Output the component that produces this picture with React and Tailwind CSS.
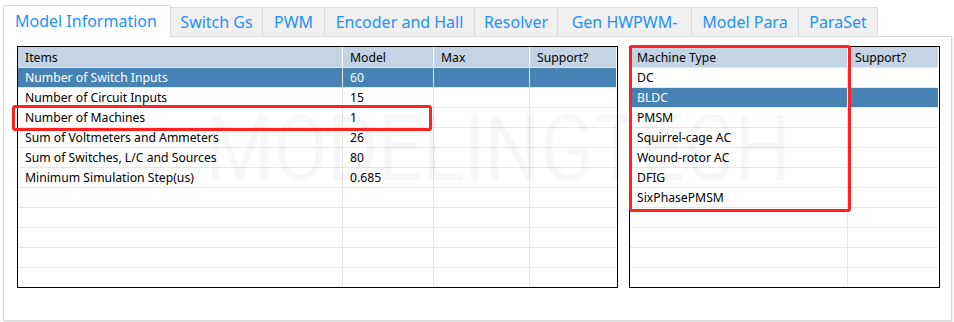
import React from 'react';

const tabs = [
  { label: 'Switch Gs', w: 'w-[92px]' },
  { label: 'PWM', w: 'w-[62px]' },
  { label: 'Encoder and Hall', w: 'w-[150px]' },
  { label: 'Resolver', w: 'w-[83px]' },
  { label: 'Gen HWPWM-', w: 'w-[134px]' },
  { label: 'Model Para', w: 'w-[107px]' },
  { label: 'ParaSet', w: 'w-[79px]' },
];

const modelRows = [
  ['Number of Switch Inputs', '60'],
  ['Number of Circuit Inputs', '15'],
  ['Number of Machines', '1'],
  ['Sum of Voltmeters and Ammeters', '26'],
  ['Sum of Switches, L/C and Sources', '80'],
  ['Minimum Simulation Step(us)', '0.685'],
  ['', ''],
  ['', ''],
  ['', ''],
  ['', ''],
  ['', ''],
];

const machines = ['DC', 'BLDC', 'PMSM', 'Squirrel-cage AC', 'Wound-rotor AC', 'DFIG', 'SixPhasePMSM', '', '', '', ''];

const cell = 'h-full flex items-center pl-[7px] pt-[2px] border-r border-[#e6e6e6] whitespace-nowrap overflow-hidden';
const head = 'h-full flex items-center pl-[7px] pt-[2px] border-r border-white whitespace-nowrap overflow-hidden';

const ModelTable = () => (
  <div className="w-[601px] h-[242px] border border-black bg-white overflow-hidden pr-px">
    <div className="flex h-[21px] bg-[#c4d4e4] border-b border-[#e6e6e6]">
      <div className={`${head} w-[325px]`}>Items</div>
      <div className={`${head} w-[91px]`}>Model</div>
      <div className={`${head} w-[96px]`}>Max</div>
      <div className={`${head} flex-1 border-r-0`}>Support?</div>
    </div>
    {modelRows.map(([name, val], i) => (
      <div key={i} className={`flex h-[20px] border-b border-[#e6e6e6] ${i === 0 ? 'bg-[#4682b4] text-white' : ''}`}>
        <div className={`${cell} w-[325px]`}>{name}</div>
        <div className={`${cell} w-[91px]`}>{val}</div>
        <div className={`${cell} w-[96px]`}></div>
        <div className={`${cell} flex-1 border-r-0`}></div>
      </div>
    ))}
  </div>
);

const MachineTable = () => (
  <div className="w-[311px] h-[242px] border border-black bg-white overflow-hidden pr-px">
    <div className="flex h-[21px] bg-[#c4d4e4] border-b border-[#e6e6e6]">
      <div className={`${head} w-[218px]`}>Machine Type</div>
      <div className={`${head} flex-1 border-r-0`}>Support?</div>
    </div>
    {machines.map((m, i) => (
      <div key={i} className={`flex h-[20px] border-b border-[#e6e6e6] ${i === 1 ? 'bg-[#4682b4] text-white' : ''}`}>
        <div className={`${cell} w-[218px]`}>{m}</div>
        <div className={`${cell} flex-1 border-r-0`}></div>
      </div>
    ))}
  </div>
);

export default function App() {
  return (
    <div className="relative w-[954px] h-[322px] bg-white text-black text-[12.2px] font-['Noto_Sans',sans-serif] overflow-hidden">
      {/* tab strip */}
      <div className="flex items-end pl-[3px] pt-[5px] h-[36px]">
        <div className="w-[168px] h-[32px] -mb-px relative z-10 bg-white border border-b-0 border-[#d9d9d9] flex items-center pl-[11px] pb-[2px] text-[16px] text-[#1e90ff]">
          Model Information
        </div>
        {tabs.map(t => (
          <div key={t.label} className={`${t.w} h-[29px] bg-[#f0f0f0] border border-l-0 border-b-0 border-[#d9d9d9] flex items-center justify-center text-[16px] text-[#1e90ff]`}>
            {t.label}
          </div>
        ))}
      </div>

      {/* content panel */}
      <div className="ml-[3px] w-[949px] h-[285px] border border-[#d9d9d9] shadow-[1px_1px_0_#ececec] flex gap-[11px] pl-[13px] pt-[9px]">
        <ModelTable />
        <MachineTable />
      </div>

      {/* watermark */}
      <div className="absolute left-[205px] top-[105px] text-[90px] leading-none tracking-[-1px] text-black/[0.03] font-['Roboto',sans-serif] pointer-events-none origin-left scale-x-[0.88]">
        MODELINGTECH
      </div>

      {/* red highlight boxes */}
      <div className="absolute left-[12px] top-[105px] w-[420px] h-[26px] border-[3px] border-[#ff2222] rounded-[3px] pointer-events-none" />
      <div className="absolute left-[629px] top-[45px] w-[222px] h-[167px] border-[3px] border-[#ff2222] rounded-[3px] pointer-events-none" />
    </div>
  );
}
